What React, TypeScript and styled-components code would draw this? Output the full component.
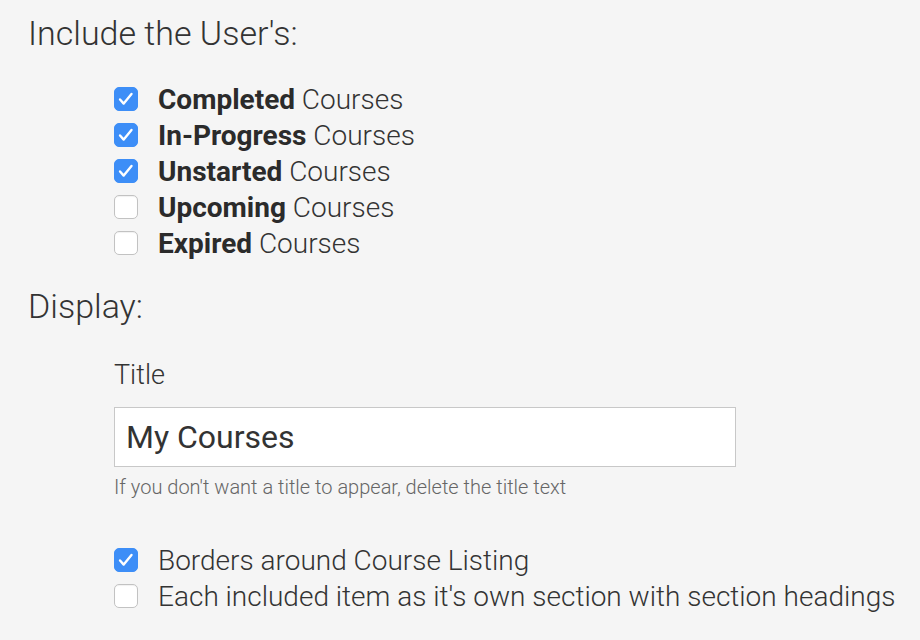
import React from "react";
import styled, { createGlobalStyle } from "styled-components";

const Global = createGlobalStyle`
	html, body {
		margin: 0;
		padding: 0;
		background: #f5f5f5;
		font-family: Roboto, "Liberation Sans", sans-serif;
		color: #333;
	}
`;

const Page = styled.div`
	width: 920px;
	height: 640px;
	padding: 12px 0 0 28px;
	box-sizing: border-box;
	overflow: hidden;
`;

const Heading = styled.h2<{ $gap?: number }>`
	margin: ${(p) => p.$gap ?? 0}px 0 0;
	font-size: 34px;
	font-weight: 300;
	line-height: 42px;
	color: #333;
`;

const Section = styled.div<{ $gap?: number }>`
	padding-left: 86px;
	margin-top: ${(p) => p.$gap ?? 0}px;
`;

const List = styled.div<{ $gap?: number }>`
	display: flex;
	flex-direction: column;
	margin-top: ${(p) => p.$gap ?? 0}px;
`;

const Row = styled.label`
	display: flex;
	align-items: center;
	gap: 20px;
	height: 36px;
	font-size: 28px;
	font-weight: 300;
	color: #333;
`;

const Box = styled.span<{ $checked?: boolean }>`
	width: 24px;
	height: 24px;
	box-sizing: border-box;
	border-radius: 5px;
	flex: none;
	display: flex;
	align-items: center;
	justify-content: center;
	background: ${(p) => (p.$checked ? "#3d8ef7" : "#fff")};
	border: 1px solid ${(p) => (p.$checked ? "#3d8ef7" : "#c2c2c2")};
	box-shadow: ${(p) => (p.$checked ? "none" : "inset 0 1px 1px rgba(0,0,0,0.06)")};
`;

const Strong = styled.b`
	font-weight: 700;
	color: #2b2b2b;
`;

const Label = styled.div`
	font-size: 27px;
	font-weight: 300;
	line-height: 32px;
	color: #333;
`;

const Input = styled.input`
	display: block;
	width: 622px;
	height: 60px;
	box-sizing: border-box;
	margin-top: 16px;
	padding: 0 11px;
	border: 1px solid #c8c8c8;
	background: #fff;
	font-family: Roboto, "Liberation Sans", sans-serif;
	font-size: 32px;
	color: #333;
	outline: none;
`;

const Help = styled.div`
	margin-top: 8px;
	font-size: 20px;
	font-weight: 300;
	line-height: 24px;
	color: #666;
`;

const Check = () => (
	<svg width="24" height="24" viewBox="0 0 24 24" fill="none">
		<path d="M5.5 12.5 L9.5 17 L18 6.5" stroke="#fff" strokeWidth="2.6" strokeLinecap="round" strokeLinejoin="round" />
	</svg>
);

const CheckRow = ({ checked, bold, text }: { checked?: boolean; bold?: string; text: string }) => (
	<Row>
		<Box $checked={checked}>{checked && <Check />}</Box>
		<span>
			{bold && <Strong>{bold}</Strong>}
			{bold ? " " : ""}
			{text}
		</span>
	</Row>
);

export default function App() {
	return (
		<>
			<Global />
			<Page>
				<Heading>Include the User's:</Heading>
				<Section $gap={27}>
					<List>
						<CheckRow checked bold="Completed" text="Courses" />
						<CheckRow checked bold="In-Progress" text="Courses" />
						<CheckRow checked bold="Unstarted" text="Courses" />
						<CheckRow bold="Upcoming" text="Courses" />
						<CheckRow bold="Expired" text="Courses" />
					</List>
				</Section>
				<Heading $gap={24}>Display:</Heading>
				<Section $gap={32}>
					<Label>Title</Label>
					<Input defaultValue="My Courses" />
					<Help>If you don't want a title to appear, delete the title text</Help>
					<List $gap={43}>
						<CheckRow checked text="Borders around Course Listing" />
						<CheckRow text="Each included item as it's own section with section headings" />
					</List>
				</Section>
			</Page>
		</>
	);
}
